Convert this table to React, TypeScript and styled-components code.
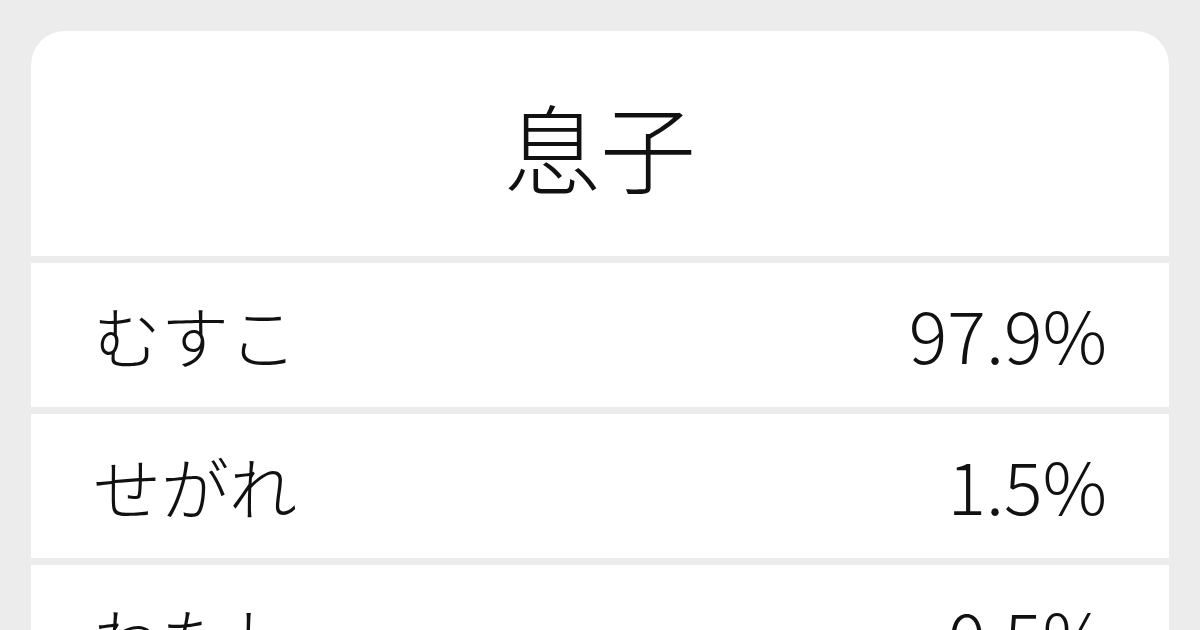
import React from 'react'
import styled, { createGlobalStyle } from 'styled-components'

const GlobalStyle = createGlobalStyle`
  html, body {
    margin: 0;
    padding: 0;
    background: #ececec;
  }
  body {
    font-family: "Noto Sans CJK JP", "Noto Sans", sans-serif;
    color: #111;
  }
`

const Page = styled.div`
  width: 1200px;
  height: 630px;
  overflow: hidden;
  padding: 31px 31px 0;
  box-sizing: border-box;
`

const Card = styled.div`
  display: flex;
  flex-direction: column;
  gap: 7px;
  border-radius: 34px 34px 0 0;
  overflow: hidden;
`

const Header = styled.div`
  height: 225px;
  background: #fff;
  display: flex;
  align-items: center;
  justify-content: center;
  padding-top: 2px;
  box-sizing: border-box;
  font-size: 96px;
  font-weight: 300;
  line-height: 1;
`

const Row = styled.div`
  height: 144px;
  flex: 0 0 auto;
  background: #fff;
  display: flex;
  align-items: center;
  justify-content: space-between;
  padding: 0 62px 0 62px;
  font-size: 68px;
  font-weight: 300;
  line-height: 1;
`

const Reading = styled.span``

const Ratio = styled.span`
  font-size: 72px;
  margin-top: -4px;
`

const rows = [
  { reading: 'むすこ', ratio: '97.9%' },
  { reading: 'せがれ', ratio: '1.5%' },
  { reading: 'わたし', ratio: '0.5%' },
]

const App = () => (
  <>
    <GlobalStyle />
    <Page>
      <Card>
        <Header>息子</Header>
        {rows.map((r) => (
          <Row key={r.reading}>
            <Reading>{r.reading}</Reading>
            <Ratio>{r.ratio}</Ratio>
          </Row>
        ))}
      </Card>
    </Page>
  </>
)

export default App
